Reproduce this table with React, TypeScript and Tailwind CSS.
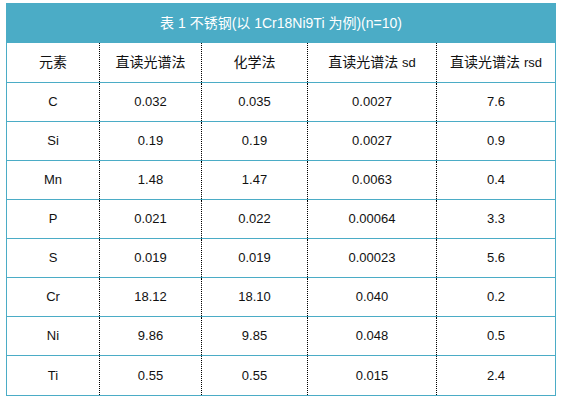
const rows: string[][] = [
    ['C', '0.032', '0.035', '0.0027', '7.6'],
    ['Si', '0.19', '0.19', '0.0027', '0.9'],
    ['Mn', '1.48', '1.47', '0.0063', '0.4'],
    ['P', '0.021', '0.022', '0.00064', '3.3'],
    ['S', '0.019', '0.019', '0.00023', '5.6'],
    ['Cr', '18.12', '18.10', '0.040', '0.2'],
    ['Ni', '9.86', '9.85', '0.048', '0.5'],
    ['Ti', '0.55', '0.55', '0.015', '2.4'],
]

const widths = ['w-[93px]', 'w-[102px]', 'w-[106px]', 'w-[129px]', 'w-[118px]']

function Row({ cells, header }: { cells: React.ReactNode[]; header?: boolean }) {
    return (
        <div className={`flex border-b border-[#4bacc6] ${header ? 'h-[40px]' : 'h-[39px]'}`}>
            {cells.map((c, i) => (
                <div
                    key={i}
                    className={`${widths[i]} shrink-0 flex items-center justify-center ${
                        i < 4 ? 'border-r border-dotted border-black' : ''
                    } ${header ? 'text-[14px]' : 'text-[13px]'}`}
                >
                    {c}
                </div>
            ))}
        </div>
    )
}

export default function App() {
    return (
        <div
            className="w-[563px] h-[400px] bg-white pt-[3px] pl-[6px] text-[#111]"
            style={{ fontFamily: '"Liberation Sans", "Noto Sans CJK SC", sans-serif' }}
        >
            <div className="w-[550px] border-x border-b border-[#4bacc6]">
                <div className="h-[40px] bg-[#4bacc6] text-white text-[14px] flex items-center justify-center">
                    表 1 不锈钢(以 1Cr18Ni9Ti 为例)(n=10)
                </div>
                <Row
                    header
                    cells={[
                        '元素',
                        '直读光谱法',
                        '化学法',
                        <span key="sd">
                            直读光谱法 <span className="text-[13px]">sd</span>
                        </span>,
                        <span key="rsd">
                            直读光谱法 <span className="text-[13px]">rsd</span>
                        </span>,
                    ]}
                />
                {rows.map((r, i) => (
                    <div key={i} className={i === rows.length - 1 ? '[&>div]:border-b-0' : ''}>
                        <Row cells={r} />
                    </div>
                ))}
            </div>
        </div>
    )
}
